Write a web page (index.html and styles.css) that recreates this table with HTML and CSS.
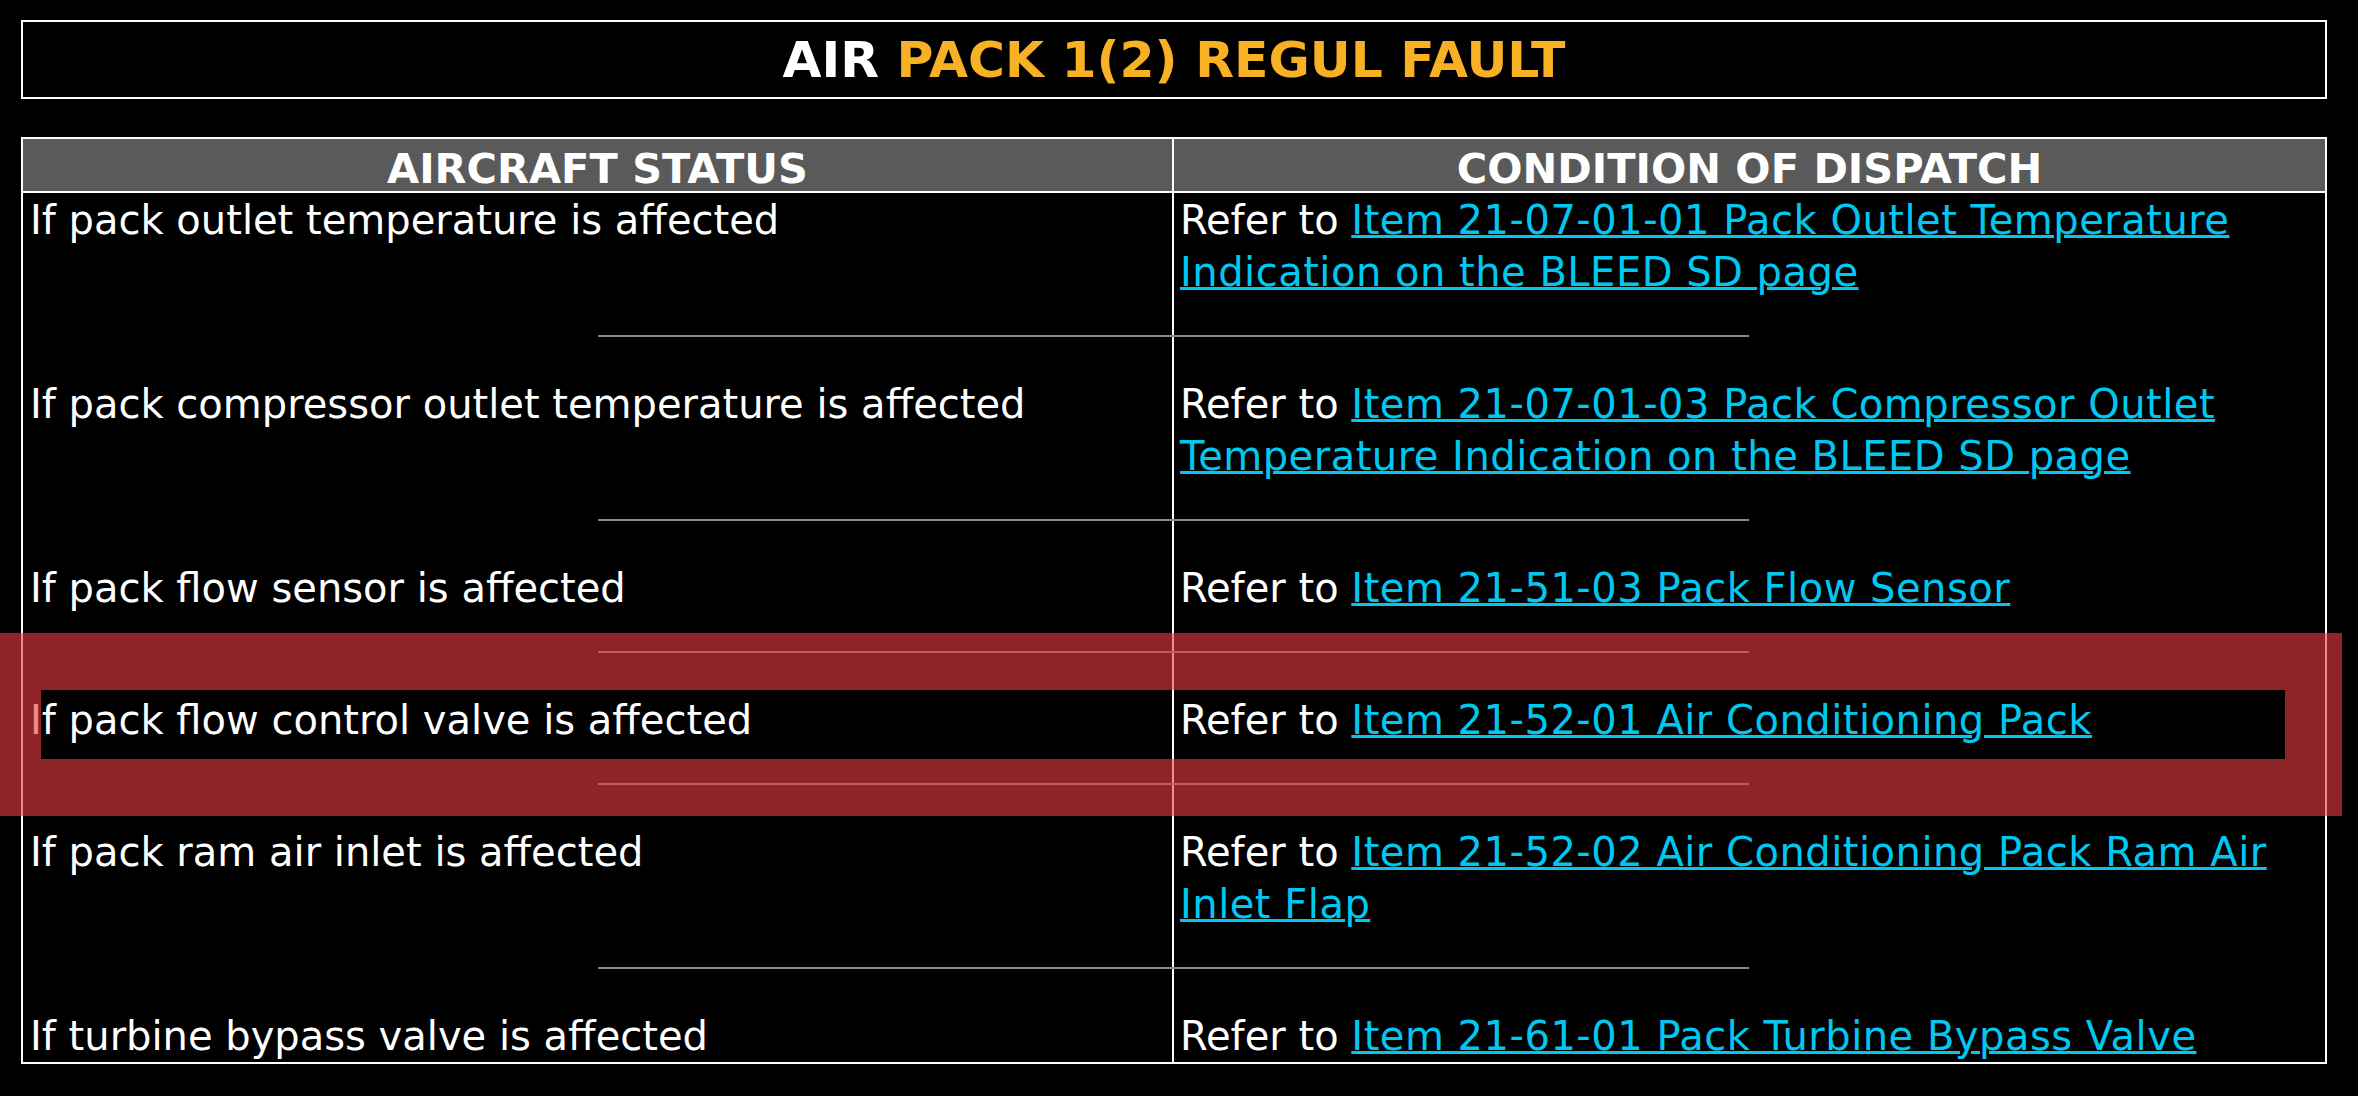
FILE: index.html
```html
<!DOCTYPE html>
<html lang="en">
<head>
<meta charset="utf-8">
<title>AIR PACK 1(2) REGUL FAULT</title>
<link rel="stylesheet" href="styles.css">
</head>
<body>
<div class="page">
  <div class="title"><span class="title-white">AIR</span> <span class="title-amber">PACK 1(2) REGUL FAULT</span></div>
  <div class="table">
    <div class="thead">
      <div class="th th-left">AIRCRAFT STATUS</div>
      <div class="th">CONDITION OF DISPATCH</div>
    </div>
    <div class="tbody">
      <div class="row">
        <div class="c1">If pack outlet temperature is affected</div>
        <div class="c2">Refer to <a href="#" class="link">Item 21-07-01-01 Pack Outlet Temperature Indication on the BLEED SD page</a></div>
      </div>
      <div class="sep"></div>
      <div class="row">
        <div class="c1">If pack compressor outlet temperature is affected</div>
        <div class="c2">Refer to <a href="#" class="link">Item 21-07-01-03 Pack Compressor Outlet Temperature Indication on the BLEED SD page</a></div>
      </div>
      <div class="sep"></div>
      <div class="row">
        <div class="c1">If pack flow sensor is affected</div>
        <div class="c2">Refer to <a href="#" class="link">Item 21-51-03 Pack Flow Sensor</a></div>
      </div>
      <div class="sep"></div>
      <div class="row">
        <div class="c1">If pack flow control valve is affected</div>
        <div class="c2">Refer to <a href="#" class="link">Item 21-52-01 Air Conditioning Pack</a></div>
      </div>
      <div class="sep"></div>
      <div class="row">
        <div class="c1">If pack ram air inlet is affected</div>
        <div class="c2">Refer to <a href="#" class="link">Item 21-52-02 Air Conditioning Pack Ram Air Inlet Flap</a></div>
      </div>
      <div class="sep"></div>
      <div class="row">
        <div class="c1">If turbine bypass valve is affected</div>
        <div class="c2">Refer to <a href="#" class="link">Item 21-61-01 Pack Turbine Bypass Valve</a></div>
      </div>
    </div>
  </div>
</div>
<div class="highlight"></div>
</body>
</html>
```
FILE: styles.css
```css
html, body {
  margin: 0;
  padding: 0;
  background: #000;
}

body {
  position: relative;
  color: #fff;
  font-family: "DejaVu Sans", Verdana, sans-serif;
  overflow: hidden;
}

.page {
  width: 2306px;
  margin-left: 21px;
  padding-top: 20px;
}

.title {
  border: 2px solid #fff;
  height: 75px;
  line-height: 75px;
  text-align: center;
  font-size: 50.4px;
  font-weight: bold;
  white-space: nowrap;
}

.title-white {
  color: #fff;
}

.title-amber {
  color: #f8b024;
}

.table {
  margin-top: 38px;
  border: 2px solid #fff;
}

.thead {
  display: grid;
  grid-template-columns: 1fr 1fr;
  height: 52px;
  background: #5a5a5a;
  border-bottom: 2px solid #fff;
}

.th {
  font-size: 41.5px;
  font-weight: bold;
  line-height: 45px;
  padding-top: 7px;
  text-align: center;
  white-space: nowrap;
}

.th-left {
  border-right: 2px solid #fff;
}

.tbody {
  padding-top: 1px;
  background: linear-gradient(90deg, transparent 1149px, #fff 1149px, #fff 1151px, transparent 1151px);
}

.row {
  display: grid;
  grid-template-columns: 1fr 1fr;
  font-size: 40px;
  line-height: 52px;
}

.c1 {
  padding-left: 7px;
  padding-right: 4px;
}

.c2 {
  padding-left: 6px;
  padding-right: 2px;
}

.link {
  color: #00c8f0;
  letter-spacing: 0.5px;
  text-decoration: underline;
  text-decoration-thickness: 3px;
  text-underline-offset: 1px;
}

.sep {
  width: 1151px;
  height: 2px;
  margin: 37px 0 41px 575px;
  background: #888;
}

.highlight {
  position: absolute;
  left: -16px;
  top: 633px;
  width: 2358px;
  height: 183px;
  box-sizing: border-box;
  border: 57px solid rgba(236, 60, 64, 0.6);
  pointer-events: none;
}
```
